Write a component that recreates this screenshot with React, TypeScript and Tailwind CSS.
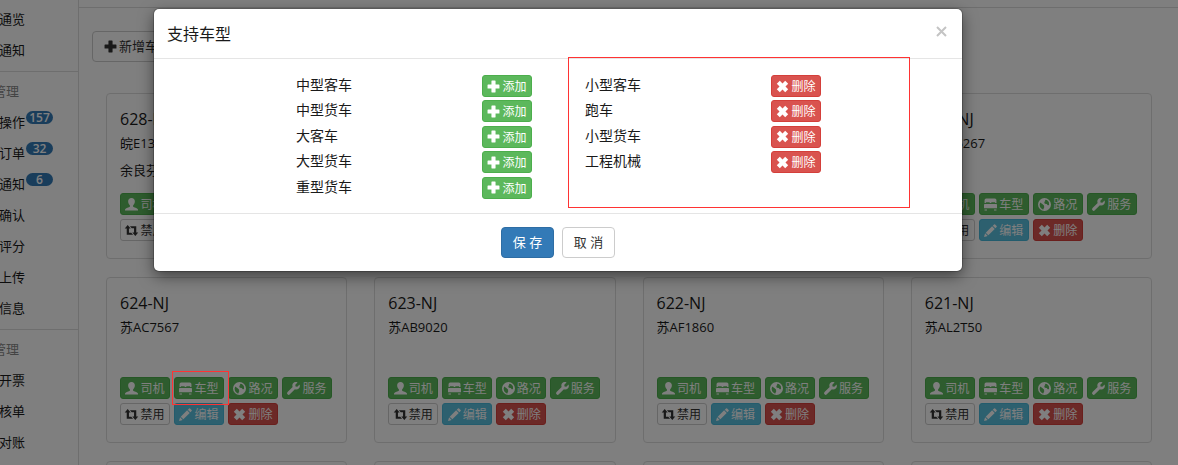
import clsx from "clsx";
import type { ReactNode } from "react";

type IconName =
  | "plus"
  | "remove"
  | "user"
  | "bed"
  | "globe"
  | "wrench"
  | "retweet"
  | "pencil";

const iconShapes: Record<IconName, ReactNode> = {
  plus: (
    <path d="M9 1h6a.8.8 0 0 1 .8.800V8.200H22.200A.8.8 0 0 1 23 9v6a.8.8 0 0 1-.8.800H15.800V22.200A.8.8 0 0 1 15 23H9a.8.8 0 0 1-.8-.800V15.800H1.800A.8.8 0 0 1 1 15V9a.8.8 0 0 1 .8-.800H8.200V1.800A.8.8 0 0 1 9 1z" />
  ),
  remove: (
    <path d="M7 1.500 12 6.500 17 1.500 22.500 7 17.500 12 22.500 17 17 22.500 12 17.500 7 22.500 1.500 17 6.500 12 1.500 7z" />
  ),
  user: (
    <path d="M12 0c-3.800 0-6.200 2.500-6.200 6.200 0 3 1.200 5.600 3.200 7.300v2.500c-1 1-8 2.500-9 5V23h24v-2c-1-2.500-8-4-9-5v-2.500c2-1.700 3.200-4.300 3.200-7.300C18.200 2.500 15.800 0 12 0z" />
  ),
  bed: (
    <path d="M4 1h16a3 3 0 0 1 3 3v5h-2.500V8h-7v1h-3V8h-7v1H1V4a3 3 0 0 1 3-3zM1.500 11h21A1.500 1.500 0 0 1 24 12.500V19H0v-6.500A1.500 1.500 0 0 1 1.500 11zM1 21h4.500v2H1zM18.500 21H23v2h-4.500z" />
  ),
  globe: (
    <path
      fillRule="evenodd"
      d="M12 0a12 12 0 1 0 0 24 12 12 0 0 0 0-24zM12.500 3l4 .5 3.500 4 .5 5-2 1.500-2.500-3-3.500-.5-1-3 2-2zM4 8.500l4 2.500 3 3 .5 3-2 4.500C5.500 20 3 16.500 3 12z"
    />
  ),
  wrench: (
    <path d="M23.200 4.500 19 8.700l-3.200-.5-.5-3.200 4.200-4.200C16.500-.5 13 .3 11.300 2.500 9.700 4.500 9.500 7 10.400 9.200L1 18.600a3 3 0 0 0 0 4.200 3 3 0 0 0 4.200 0l9.400-9.400c2.400.9 5.200.6 7.100-1.300 2-2 2.500-5.100 1.500-7.600z" />
  ),
  retweet: (
    <path d="M5 2l5.500 6.500H7.300V16h4.200l3.500 4H3.200V8.500H-.5zM9 4h11.800v11.500h3.700L19 22l-5.500-6.500h3.200V8h-4.200z" />
  ),
  pencil: (
    <path d="M18.500.7a1.500 1.500 0 0 1 2 0l2.800 2.800a1.500 1.500 0 0 1 0 2L21 7.800 16.200 3zM15 4.200 19.800 9 8 20.800 3.200 16zM2 17.200 6.800 22 0 24z" />
  ),
};

const Icon = ({ name, size = 13 }: { name: IconName; size?: number }) => (
  <svg
    aria-hidden="true"
    width={size}
    height={size}
    viewBox="0 0 24 24"
    fill="currentColor"
    className="shrink-0 overflow-visible"
  >
    {iconShapes[name]}
  </svg>
);

type Tone = "success" | "info" | "danger" | "default";

const toneClasses: Record<Tone, string> = {
  success: "border-[#4cae4c] bg-[#5cb85c] text-white",
  info: "border-[#46b8da] bg-[#5bc0de] text-white",
  danger: "border-[#d43f3a] bg-[#d9534f] text-white",
  default: "border-[#ccc] bg-white text-[#333]",
};

interface SmallButtonProps {
  icon: IconName;
  tone: Tone;
  label: string;
  highlighted?: boolean;
}

const SmallButton = ({ icon, tone, label, highlighted }: SmallButtonProps) => (
  <button
    type="button"
    className={clsx(
      "flex h-[22px] w-[50px] cursor-pointer items-center justify-center gap-0.5 rounded-[3px] border text-xs",
      toneClasses[tone],
      highlighted && "relative"
    )}
  >
    <Icon name={icon} />
    <span className="pt-0.5 whitespace-nowrap">{label}</span>
    {highlighted && (
      <span className="absolute -top-[7px] -right-1.5 -bottom-[7px] -left-[3px] z-20 border border-[#ff3333]" />
    )}
  </button>
);

const cardActions: SmallButtonProps[] = [
  { icon: "user", tone: "success", label: "司机" },
  { icon: "bed", tone: "success", label: "车型" },
  { icon: "globe", tone: "success", label: "路况" },
  { icon: "wrench", tone: "success", label: "服务" },
  { icon: "retweet", tone: "default", label: "禁用" },
  { icon: "pencil", tone: "info", label: "编辑" },
  { icon: "remove", tone: "danger", label: "删除" },
];

interface Vehicle {
  code: string;
  plate: string;
  driver?: string;
  highlighted?: boolean;
}

const vehicles: Vehicle[] = [
  { code: "628-NJ", plate: "皖E13267", driver: "余良芬" },
  { code: "627-NJ", plate: "苏AC7210" },
  { code: "626-NJ", plate: "苏AF1652" },
  { code: "625-NJ", plate: "苏AD6267" },
  { code: "624-NJ", plate: "苏AC7567", highlighted: true },
  { code: "623-NJ", plate: "苏AB9020" },
  { code: "622-NJ", plate: "苏AF1860" },
  { code: "621-NJ", plate: "苏AL2T50" },
  { code: "620-NJ", plate: "苏AL2T51" },
  { code: "619-NJ", plate: "苏AL2T52" },
  { code: "618-NJ", plate: "苏AL2T53" },
  { code: "617-NJ", plate: "苏AL2T55" },
];

const VehicleCard = ({ code, plate, driver, highlighted }: Vehicle) => (
  <article className="rounded border border-[#ddd] bg-white px-[13px] pt-[13px] pb-[17px]">
    <h3 className="text-base leading-6">{code}</h3>
    <p className="text-[13px] leading-6">{plate}</p>
    <p className="mt-[3px] h-6 text-[13px] leading-6">{driver}</p>
    <div className="mt-[11px] flex flex-wrap gap-1">
      {cardActions.map((action) => (
        <SmallButton
          key={action.label}
          {...action}
          highlighted={highlighted && action.icon === "bed"}
        />
      ))}
    </div>
  </article>
);

interface NavItem {
  label: string;
  count?: number;
}

const navGroups: { title?: string; items: NavItem[] }[] = [
  { items: [{ label: "通览" }, { label: "通知" }] },
  {
    title: "管理",
    items: [
      { label: "操作", count: 157 },
      { label: "订单", count: 32 },
      { label: "通知", count: 6 },
      { label: "确认" },
      { label: "评分" },
      { label: "上传" },
      { label: "信息" },
    ],
  },
  {
    title: "管理",
    items: [{ label: "开票" }, { label: "核单" }, { label: "对账" }],
  },
];

const Sidebar = () => (
  <nav className="w-[79px] shrink-0 overflow-hidden border-r border-[#ddd] pt-1 text-[13px]">
    {navGroups.map((group, index) => (
      <div
        key={index}
        className={clsx(index > 0 && "mt-[5px] border-t border-[#ddd] pt-1")}
      >
        {group.title && (
          <h2 className="-ml-[7px] h-[31px] leading-[31px] text-[#888]">
            {group.title}
          </h2>
        )}
        <ul>
          {group.items.map((item) => (
            <li key={item.label} className="-ml-px h-[31px] leading-[31px]">
              <a href="#" className="flex">
                {item.label}
                {item.count !== undefined && (
                  <span className="mt-1 ml-px h-[13px] w-[27px] rounded-full bg-[#337ab7] text-center text-xs leading-[13px] font-semibold text-white">
                    {item.count}
                  </span>
                )}
              </a>
            </li>
          ))}
        </ul>
      </div>
    ))}
  </nav>
);

const availableTypes = ["中型客车", "中型货车", "大客车", "大型货车", "重型货车"];
const supportedTypes = ["小型客车", "跑车", "小型货车", "工程机械"];

interface TypeListProps {
  types: string[];
  action: SmallButtonProps;
  outlined?: boolean;
}

const TypeList = ({ types, action, outlined }: TypeListProps) => (
  <div className="relative">
    <ul className="grid min-h-[127px] grid-rows-5">
      {types.map((type) => (
        <li key={type} className="flex items-start">
          <span className="w-[186px] text-sm leading-5">{type}</span>
          <SmallButton {...action} />
        </li>
      ))}
    </ul>
    {outlined && (
      <div className="pointer-events-none absolute -top-[18px] -right-9 -bottom-[6px] -left-[17px] border border-[#ff3333]" />
    )}
  </div>
);

const VehicleTypeDialog = () => (
  <div className="absolute inset-0 z-10 flex items-start bg-black/50 pt-[9px] pr-[216px] pl-[154px]">
    <section
      role="dialog"
      aria-modal="true"
      aria-labelledby="dialog-title"
      className="flex-1 rounded-[5px] bg-white shadow-[0_5px_15px_rgba(0,0,0,0.5),0_0_0_1px_rgba(0,0,0,0.2)]"
    >
      <header className="flex h-[50px] items-center justify-between border-b border-[#e5e5e5] px-[13px]">
        <h2 id="dialog-title" className="text-base">
          支持车型
        </h2>
        <button
          type="button"
          aria-label="关闭"
          className="mb-1 cursor-pointer pr-0.5 text-[#c4c4c4]"
        >
          <svg
            width="11"
            height="11"
            viewBox="0 0 11 11"
            stroke="currentColor"
            strokeWidth="2"
          >
            <path d="M1 1l9 9M10 1l-9 9" />
          </svg>
        </button>
      </header>
      <div className="grid grid-cols-2 pt-4 pr-[88px] pb-[11px] pl-[142px]">
        <TypeList
          types={availableTypes}
          action={{ icon: "plus", tone: "success", label: "添加" }}
        />
        <TypeList
          types={supportedTypes}
          action={{ icon: "remove", tone: "danger", label: "删除" }}
          outlined
        />
      </div>
      <footer className="flex justify-center gap-2 border-t border-[#e5e5e5] py-[13px]">
        <button
          type="button"
          className="h-[31px] w-[53px] cursor-pointer rounded border border-[#2e6da4] bg-[#337ab7] text-[13px] text-white"
        >
          保 存
        </button>
        <button
          type="button"
          className="h-[31px] w-[53px] cursor-pointer rounded border border-[#ccc] bg-white text-[13px] text-[#333]"
        >
          取 消
        </button>
      </footer>
    </section>
  </div>
);

export default function App() {
  return (
    <div className="relative flex h-screen overflow-hidden bg-white font-['Open_Sans','Noto_Sans_CJK_SC',sans-serif] text-[#1a1a1a]">
      <Sidebar />
      <main className="min-w-0 flex-1 pt-[7px]">
        <div className="border-t border-[#ddd] px-[13px] pt-[23px]">
          <button
            type="button"
            className="flex h-[31px] cursor-pointer items-center gap-0.5 rounded border border-[#ccc] bg-white px-[11px] text-[13px] text-[#333]"
          >
            <Icon name="plus" />
            新增车辆
          </button>
        </div>
        <div className="mt-[31px] grid grid-cols-4 gap-x-[27px] gap-y-[18px] pr-[26px] pl-[27px]">
          {vehicles.map((vehicle) => (
            <VehicleCard key={vehicle.code} {...vehicle} />
          ))}
        </div>
      </main>
      <VehicleTypeDialog />
    </div>
  );
}
